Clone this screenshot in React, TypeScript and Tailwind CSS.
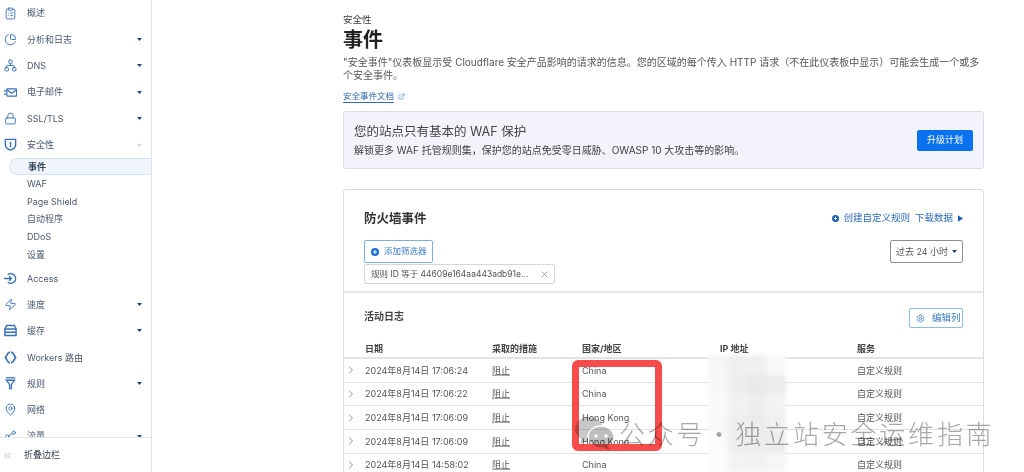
import React from 'react';
import { ClipboardList, ChartPie, Network, Lock, Zap, MapPin, Share2, ChevronsLeft, ChevronRight, ExternalLink, X, Settings } from 'lucide-react';

type IconProps = { className?: string; strokeWidth?: number };

const MailFast = ({ className }: IconProps) => (
  <svg viewBox="0 0 16 14" fill="none" stroke="currentColor" strokeWidth="1.5" className={className}>
    <rect x="3.5" y="2.5" width="12" height="9" rx="1" />
    <path d="M3.5 3.5L9.5 8l6-4.5M0 5h2.5M0 9h2.5" />
  </svg>
);

const ShieldIcon = ({ className }: IconProps) => (
  <svg viewBox="0 0 14 14" fill="none" stroke="currentColor" strokeWidth="1.5" className={className}>
    <path d="M1.5 1.5h11v6c0 2.6-2.5 4.4-5.5 5.5-3-1.1-5.5-2.9-5.5-5.5z" />
    <path d="M7 4v6" />
  </svg>
);

const AccessIcon = ({ className }: IconProps) => (
  <svg viewBox="0 0 14 14" fill="none" stroke="currentColor" strokeWidth="1.5" className={className}>
    <path d="M4 3a5.2 5.2 0 1 1 0 8" />
    <path d="M0 7h8M5.5 4.5L8 7l-2.5 2.5" />
  </svg>
);

const CacheIcon = ({ className }: IconProps) => (
  <svg viewBox="0 0 14 14" fill="none" stroke="currentColor" strokeWidth="1.6" className={className}>
    <path d="M3 1.5h8L13 5v7.5H1V5z" />
    <path d="M1 5.5h12M1 9h12" />
  </svg>
);

const WorkersIcon = ({ className }: IconProps) => (
  <svg viewBox="0 0 14 14" fill="none" stroke="currentColor" strokeWidth="1.8" className={className}>
    <path d="M5 1.5L1.5 7 5 12.5M9 1.5L12.5 7 9 12.5" />
    <path d="M5 1.5h1.5M5 12.5h1.5M7.5 1.5H9M7.5 12.5H9" />
  </svg>
);

const RulesIcon = ({ className }: IconProps) => (
  <svg viewBox="0 0 14 14" fill="none" stroke="currentColor" strokeWidth="1.4" className={className}>
    <path d="M2 1h10M2.5 3.5h9L8 8v4.5H6V8z" />
  </svg>
);

const Caret = ({ up = false }: { up?: boolean }) => (
  <svg viewBox="0 0 8 5" className={up ? 'w-[5px] h-[3px] text-gray-300' : 'w-[5px] h-[3px] text-[#1d3f72]'}>
    <path d={up ? 'M4 0L8 5H0z' : 'M0 0h8L4 5z'} fill="currentColor" />
  </svg>
);

const PlusDot = ({ className }: { className: string }) => (
  <svg viewBox="0 0 16 16" className={className}>
    <circle cx="8" cy="8" r="8" fill="currentColor" />
    <path d="M4 8h8M8 4v8" stroke="#fff" strokeWidth="2" />
  </svg>
);

const NavRow = ({ icon: Icon, label, caret, up }: { icon: React.ElementType; label: string; caret?: boolean; up?: boolean }) => (
  <div className="flex items-center h-[26.3px] pl-[4px] pr-[9px] text-[9px] text-[#4a5a70]">
    <Icon className="w-[13px] h-[13px] text-[#3a72b8] mr-[10px] shrink-0" strokeWidth={1.7} />
    <span className="flex-1">{label}</span>
    {caret && <Caret up={up} />}
  </div>
);

const SubRow = ({ label, active }: { label: string; active?: boolean }) => (
  <div
    className={
      active
        ? 'flex items-center h-[17px] ml-[9px] pl-[18px] text-[9px] font-bold text-[#36465c] bg-[#eff5fb] border border-r-0 border-[#d5e4f3] rounded-l-full'
        : 'flex items-center h-[17.7px] pl-[27px] text-[9px] text-[#4a5a70]'
    }
  >
    {label}
  </div>
);

const rows = [
  ['2024年8月14日 17:06:24', 'China'],
  ['2024年8月14日 17:06:22', 'China'],
  ['2024年8月14日 17:06:09', 'Hong Kong'],
  ['2024年8月14日 17:06:09', 'Hong Kong'],
  ['2024年8月14日 14:58:02', 'China'],
];

const blurCells = [
  'bg-[#f6f6f6]', 'bg-[#efefef]', 'bg-[#f0f0f0]', 'bg-[#f8f8f8]',
  'bg-[#f7f7f7]', 'bg-[#eeeeee]', 'bg-[#e9e9e9]', 'bg-[#ececec]',
  'bg-[#fafafa]', 'bg-[#f1f1f1]', 'bg-[#eeeeee]', 'bg-[#f3f3f3]',
  'bg-[#f8f8f8]', 'bg-[#efefef]', 'bg-[#ebebeb]', 'bg-[#f0f0f0]',
  'bg-[#fbfbfb]', 'bg-[#eeeeee]', 'bg-[#ededed]', 'bg-[#ececec]',
  'bg-[#fbfbfb]', 'bg-[#f3f3f3]', 'bg-[#f2f2f2]', 'bg-[#f6f6f6]',
];

export default function App() {
  return (
    <div className="relative flex w-[1024px] h-[472px] overflow-hidden bg-white font-['Inter','Noto_Sans_CJK_SC',sans-serif]">
      <aside className="flex flex-col w-[152px] h-full shrink-0 border-r border-[#dfe3e8]">
        <div className="flex-1 overflow-hidden">
          <NavRow icon={ClipboardList} label="概述" />
          <NavRow icon={ChartPie} label="分析和日志" caret />
          <NavRow icon={Network} label="DNS" caret />
          <NavRow icon={MailFast} label="电子邮件" caret />
          <NavRow icon={Lock} label="SSL/TLS" caret />
          <NavRow icon={ShieldIcon} label="安全性" caret up />
          <SubRow label="事件" active />
          <SubRow label="WAF" />
          <SubRow label="Page Shield" />
          <SubRow label="自动程序" />
          <SubRow label="DDoS" />
          <SubRow label="设置" />
          <div className="h-[2px]" />
          <NavRow icon={AccessIcon} label="Access" />
          <NavRow icon={Zap} label="速度" caret />
          <NavRow icon={CacheIcon} label="缓存" caret />
          <NavRow icon={WorkersIcon} label="Workers 路由" />
          <NavRow icon={RulesIcon} label="规则" caret />
          <NavRow icon={MapPin} label="网络" />
          <NavRow icon={Share2} label="流量" caret />
        </div>
        <div className="flex items-center h-[35px] shrink-0 pl-[2px] bg-white border-t border-[#e3e6ea] text-[9px] text-[#36404e]">
          <ChevronsLeft className="w-[11px] h-[11px] text-[#7f9fcb] mr-[11px]" strokeWidth={1.5} />
          折叠边栏
        </div>
      </aside>

      <main className="flex-1 pl-[191px] pr-[40px] pt-[14px] min-w-0">
        <div className="text-[9.5px] leading-[12px] text-[#3c3c3c]">安全性</div>
        <h1 className="text-[20px] leading-[28px] font-bold text-[#222]">事件</h1>
        <p className="mt-[2px] w-[640px] text-[10px] leading-[13px] text-[#555]">
          "安全事件"仪表板显示受 Cloudflare 安全产品影响的请求的信息。您的区域的每个传入 HTTP 请求（不在此仪表板中显示）可能会生成一个或多个安全事件。
        </p>
        <div className="flex items-center mt-[8px] h-[13px]">
          <span className="text-[8.5px] text-[#2f6cb5] border-b border-[#2f6cb5] leading-[11px]">安全事件文档</span>
          <ExternalLink className="w-[7px] h-[7px] ml-[4px] text-[#5a8cc8]" />
        </div>

        <section className="flex items-center justify-between h-[58px] mt-[8px] pl-[10px] pr-[10px] bg-[#f2f3fb] border border-[#dcdce0] rounded-[3px]">
          <div>
            <div className="text-[12.5px] leading-[18px] text-[#444]">您的站点只有基本的 WAF 保护</div>
            <div className="mt-[3px] text-[10px] leading-[13px] text-[#444]">解锁更多 WAF 托管规则集，保护您的站点免受零日威胁、OWASP 10 大攻击等的影响。</div>
          </div>
          <button className="w-[56px] h-[21px] bg-[#0a72ef] rounded-[2px] text-[9px] text-white">升级计划</button>
        </section>

        <section className="mt-[20px] bg-white border border-[#dcdcdc] rounded-[3px]">
          <div className="h-[103px] px-[20px] pt-[20px] border-b-2 border-[#e6e6e6]">
            <div className="flex items-center justify-between">
              <h2 className="text-[12.5px] leading-[17px] font-bold text-[#333]">防火墙事件</h2>
              <div className="flex items-center text-[9.5px] text-[#2f6cb5]">
                <PlusDot className="w-[7px] h-[7px] mr-[4px] text-[#1c60b4]" />
                <span>创建自定义规则</span>
                <span className="ml-[5px]">下载数据</span>
                <svg viewBox="0 0 6 8" className="w-[5px] h-[7px] ml-[5px] text-[#1c60b4]"><path d="M0 0l6 4-6 4z" fill="currentColor" /></svg>
              </div>
            </div>
            <div className="flex items-start justify-between mt-[13px]">
              <div>
                <button className="flex items-center w-[69px] h-[23px] pl-[6px] border border-[#7fb0e0] rounded-[2px] text-[8.5px] text-[#3b7cc6]">
                  <PlusDot className="w-[8px] h-[8px] mr-[5px] text-[#1c6fd0]" />
                  添加筛选器
                </button>
                <div className="flex items-center w-[191px] h-[20px] mt-[1px] pl-[6px] border border-[#d6d6d6] rounded-[2px] text-[8.5px] text-[#555]">
                  <span className="flex-1">规则 ID 等于 44609e164aa443adb91e...</span>
                  <X className="w-[11px] h-[11px] mr-[4px] text-[#666]" strokeWidth={1.2} />
                </div>
              </div>
              <button className="flex items-center justify-center gap-[4px] w-[73px] h-[23px] border border-[#8e8e8e] rounded-[2px] text-[9px] text-[#555]">
                过去 24 小时
                <Caret />
              </button>
            </div>
          </div>

          <div className="flex items-center justify-between h-[48px] px-[20px] pt-[2px] pb-[4px]">
            <h3 className="text-[10px] font-bold text-[#444]">活动日志</h3>
            <button className="flex items-center w-[54px] h-[20px] mt-[4px] pl-[6px] border border-[#8fbbe6] rounded-[2px] text-[9.5px] text-[#3b7cc6]">
              <Settings className="w-[9px] h-[9px] mr-[7px]" />
              编辑列
            </button>
          </div>

          <div className="grid grid-cols-[21px_127px_90px_138px_137px_1fr] items-center h-[18px] border-b-2 border-[#e4e4e4] text-[9px] font-bold text-[#444]">
            <span />
            <span>日期</span>
            <span>采取的措施</span>
            <span>国家/地区</span>
            <span>IP 地址</span>
            <span>服务</span>
          </div>
          {rows.map(([date, country], i) => (
            <div key={i} className="grid grid-cols-[21px_127px_90px_138px_137px_1fr] items-center h-[23.7px] border-b border-[#e2e2e2] text-[9px] text-[#555]">
              <ChevronRight className="w-[12px] h-[12px] ml-[1px] text-[#555]" strokeWidth={1.3} />
              <span>{date}</span>
              <span className="underline underline-offset-1 decoration-[#aaa]">阻止</span>
              <span>{country}</span>
              <span />
              <span>自定义规则</span>
            </div>
          ))}
        </section>
      </main>

      {/* 打码的 IP 列 */}
      <div className="absolute left-[708px] top-[355px] grid grid-cols-4 w-[78px] h-[117px] blur-[2px]">
        {blurCells.map((c, i) => (
          <div key={i} className={c} />
        ))}
      </div>

      {/* 红框标注 */}
      <div className="absolute left-[572px] top-[360px] w-[90px] h-[91px] border-[7px] border-[#f64c4c] rounded-[6px]" />

      {/* 水印 */}
      <div className="absolute left-[575px] top-[416px] flex items-center text-[#8a8a8a] opacity-75 mix-blend-multiply pointer-events-none">
        <svg viewBox="0 0 40 34" className="w-[40px] h-[34px] mr-[7px]">
          <ellipse cx="14" cy="13" rx="14" ry="12" fill="#b5b5b5" />
          <path d="M7 21l-2 7 8-4z" fill="#b5b5b5" />
          <ellipse cx="26" cy="21" rx="13" ry="11" fill="#a8a8a8" stroke="#fff" strokeWidth="1.5" />
          <path d="M32 29l3 5-8-3z" fill="#a8a8a8" />
          <circle cx="21" cy="20" r="1.8" fill="#fff" />
          <circle cx="31" cy="20" r="1.8" fill="#fff" />
        </svg>
        <span className="-ml-[3px] text-[26px] leading-[32px] tracking-[2.8px] [word-spacing:-8px] whitespace-nowrap font-['Noto_Sans_CJK_SC',sans-serif] font-light">公众号 · 独立站安全运维指南</span>
      </div>
    </div>
  );
}
